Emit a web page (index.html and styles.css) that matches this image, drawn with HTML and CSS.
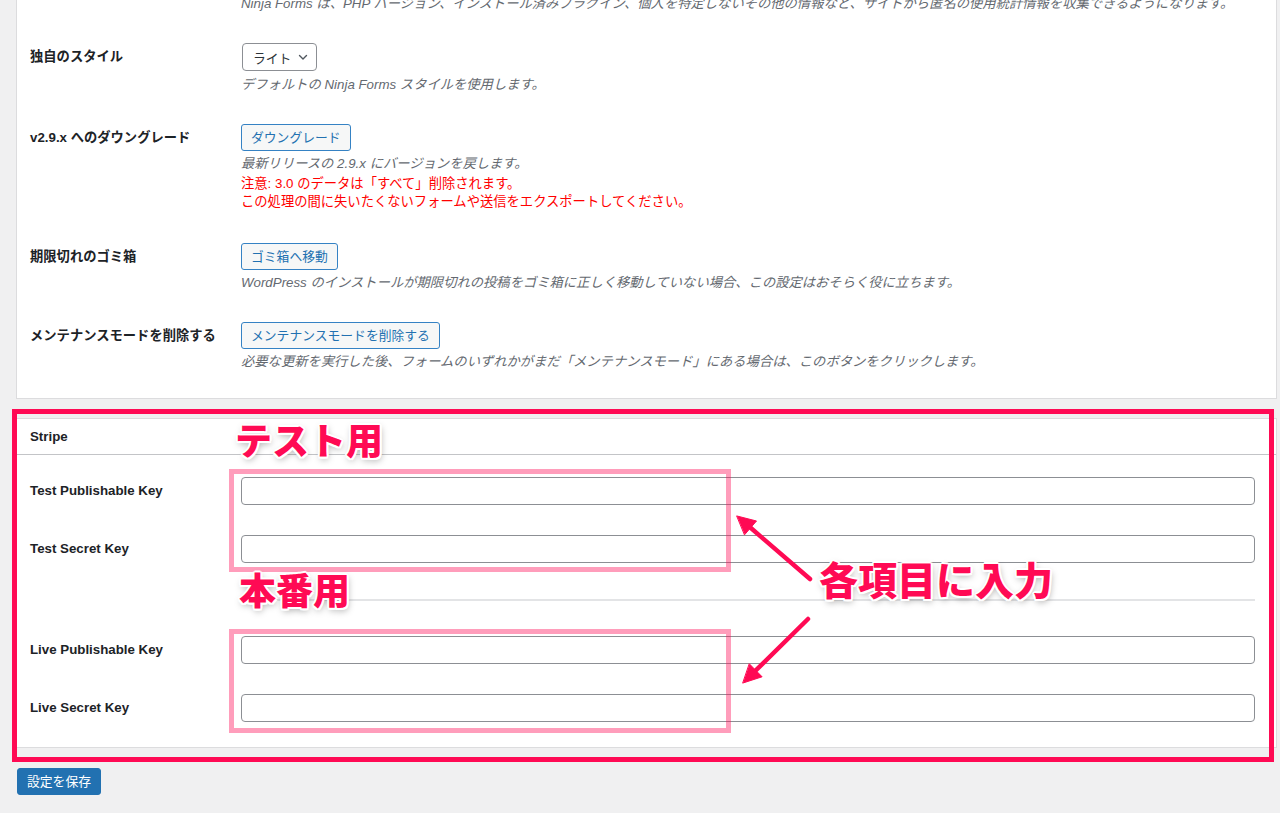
FILE: index.html
```html
<!DOCTYPE html>
<html lang="ja">
<head>
<meta charset="utf-8">
<title>Ninja Forms 設定</title>
<link rel="stylesheet" href="styles.css">
</head>
<body>
<div class="page">
  <div class="card card--clipped">
    <div class="row row--lead">
      <div class="th"></div>
      <div class="td td--lead">
        <p class="description description--lead">Ninja Forms は、PHP バージョン、インストール済みプラグイン、個人を特定しないその他の情報など、サイトから匿名の使用統計情報を収集できるようになります。</p>
      </div>
    </div>
    <div class="row">
      <div class="th">独自のスタイル</div>
      <div class="td">
        <div class="select">ライト
          <svg class="chev" width="10" height="7" viewBox="0 0 10 7"><polyline points="1.5,1.5 5,5 8.5,1.5" fill="none" stroke="#50575e" stroke-width="1.4" stroke-linecap="round" stroke-linejoin="round"/></svg>
        </div>
        <p class="description description--after-select">デフォルトの Ninja Forms スタイルを使用します。</p>
      </div>
    </div>
    <div class="row">
      <div class="th">v2.9.x へのダウングレード</div>
      <div class="td">
        <button class="button" type="button">ダウングレード</button>
        <p class="description">最新リリースの 2.9.x にバージョンを戻します。</p>
        <div class="warning">
          <div>注意: 3.0 のデータは「すべて」削除されます。</div>
          <div>この処理の間に失いたくないフォームや送信をエクスポートしてください。</div>
        </div>
      </div>
    </div>
    <div class="row">
      <div class="th">期限切れのゴミ箱</div>
      <div class="td">
        <button class="button" type="button">ゴミ箱へ移動</button>
        <p class="description">WordPress のインストールが期限切れの投稿をゴミ箱に正しく移動していない場合、この設定はおそらく役に立ちます。</p>
      </div>
    </div>
    <div class="row">
      <div class="th">メンテナンスモードを削除する</div>
      <div class="td">
        <button class="button" type="button">メンテナンスモードを削除する</button>
        <p class="description">必要な更新を実行した後、フォームのいずれかがまだ「メンテナンスモード」にある場合は、このボタンをクリックします。</p>
      </div>
    </div>
  </div>

  <div class="card card--stripe">
    <h2 class="card-title">Stripe</h2>
    <div class="card-body">
      <div class="row">
        <div class="th">Test Publishable Key</div>
        <div class="td"><input class="text-input" type="text"></div>
      </div>
      <div class="row">
        <div class="th">Test Secret Key</div>
        <div class="td"><input class="text-input" type="text"></div>
      </div>
      <div class="row">
        <div class="th th--empty"></div>
        <div class="td td--divider"><div class="divider"></div></div>
      </div>
      <div class="row">
        <div class="th">Live Publishable Key</div>
        <div class="td"><input class="text-input" type="text"></div>
      </div>
      <div class="row">
        <div class="th">Live Secret Key</div>
        <div class="td"><input class="text-input" type="text"></div>
      </div>
    </div>
  </div>

  <button class="button-primary" type="button">設定を保存</button>

  <div class="annotations">
    <div class="frame frame--red"></div>
    <div class="frame frame--pink frame--test"></div>
    <div class="frame frame--pink frame--live"></div>
    <div class="note note--test">テスト用</div>
    <div class="note note--live">本番用</div>
    <div class="note note--input">各項目に入力</div>
    <svg class="arrows" width="1280" height="813" viewBox="0 0 1280 813">
      <g stroke="#ff0a54" stroke-width="4.5" stroke-linecap="round" fill="#ff0a54">
        <line x1="810" y1="579" x2="750.6" y2="527.8"/>
        <polygon points="737,516 756.5,521 744.7,534.6" stroke-width="1" stroke-linejoin="round"/>
        <line x1="808" y1="619" x2="755.8" y2="670.4"/>
        <polygon points="743,683 762.1,676.8 749.5,664" stroke-width="1" stroke-linejoin="round"/>
      </g>
    </svg>
  </div>
</div>
</body>
</html>
```
FILE: styles.css
```css
* { box-sizing: border-box; }

html, body {
  margin: 0;
  padding: 0;
}

body {
  background: #f0f0f1;
  color: #1d2327;
  font-family: "Liberation Sans", "Noto Sans CJK JP", sans-serif;
  font-size: 13.3px;
  overflow: hidden;
  height: 813px;
}

.page {
  position: relative;
  display: flow-root;
  padding: 0 3px 0 16px;
  height: 813px;
}

.card {
  background: #fff;
  border: 1px solid #dcdcde;
}

.card--clipped {
  margin-top: -5px;
  border-top: none;
  padding-bottom: 12px;
}

.card--stripe {
  margin-top: 19px;
}

.card-title {
  margin: 0;
  padding: 8px 13px;
  font-size: 13.3px;
  line-height: 19px;
  font-weight: 700;
  border-bottom: 1px solid #c3c4c7;
}

.card-body {
  padding: 7px 0 10px;
}

.row {
  display: grid;
  grid-template-columns: 224px 1fr;
}

.th {
  padding: 20px 10px 20px 13px;
  line-height: 18px;
  font-weight: 700;
  color: #1d2327;
}

.td {
  padding: 15px 21px 15px 0;
}

.td--lead {
  padding-top: 0;
}

.row--lead .th {
  padding: 0;
}

.description {
  margin: 4px 0 0;
  line-height: 18px;
  color: #646970;
  font-style: italic;
}

.description--lead {
  margin-top: 0;
}

.description--after-select {
  margin-top: 5px;
}

.warning {
  margin: 2px 0 2px;
  line-height: 18px;
  color: #f00;
}

.select {
  display: inline-flex;
  align-items: center;
  gap: 7px;
  height: 28px;
  padding: 0 8px 0 10px;
  margin-left: 1px;
  border: 1px solid #8c8f94;
  border-radius: 4px;
  background: #fff;
  color: #2c3338;
  font-size: 12.8px;
}

.chev {
  display: block;
  margin-top: 1px;
}

.button {
  display: inline-block;
  height: 27px;
  padding: 0 9px;
  margin: 0;
  border: 1px solid #3582c4;
  border-radius: 3px;
  background: #f6f7f7;
  color: #2271b1;
  font-family: inherit;
  font-size: 12.8px;
  line-height: 25px;
  vertical-align: top;
}

.text-input {
  display: block;
  width: 100%;
  height: 28px;
  margin: 0;
  padding: 0 8px;
  border: 1px solid #8c8f94;
  border-radius: 4px;
  background: #fff;
  font-family: inherit;
  font-size: 13px;
}

.th--empty {
  padding: 0;
}

.td--divider {
  padding: 21px 21px 20px 0;
}

.divider {
  height: 2px;
  background: #e3e4e6;
}

.button-primary {
  display: block;
  margin: 20px 0 0 1px;
  height: 27px;
  padding: 0 9px;
  border: 1px solid #2271b1;
  border-radius: 3px;
  background: #2271b1;
  color: #fff;
  font-family: inherit;
  font-size: 12.8px;
  line-height: 25px;
}

/* annotation overlay */
.annotations {
  position: absolute;
  left: 0;
  top: 0;
  width: 1280px;
  height: 813px;
  pointer-events: none;
}

.frame {
  position: absolute;
  border-style: solid;
}

.frame--red {
  left: 12px;
  top: 409px;
  width: 1262px;
  height: 353px;
  border-width: 5px;
  border-color: #ff0a54;
}

.frame--pink {
  left: 229px;
  width: 502px;
  border-width: 5px;
  border-color: rgba(255, 10, 84, 0.4);
}

.frame--test {
  top: 469px;
  height: 103px;
}

.frame--live {
  top: 629px;
  height: 104px;
}

.note {
  position: absolute;
  color: #ff0a54;
  font-family: "Noto Sans CJK JP", sans-serif;
  font-weight: 900;
  line-height: 1;
  white-space: nowrap;
  text-shadow:
    2px 0 0 #fff, -2px 0 0 #fff, 0 2px 0 #fff, 0 -2px 0 #fff,
    1.5px 1.5px 0 #fff, -1.5px 1.5px 0 #fff, 1.5px -1.5px 0 #fff, -1.5px -1.5px 0 #fff,
    1px 3px 7px rgba(0, 0, 0, 0.35);
}

.note--test {
  left: 235px;
  top: 421px;
  font-size: 37px;
}

.note--live {
  left: 239px;
  top: 571px;
  font-size: 37px;
}

.note--input {
  left: 819px;
  top: 559px;
  font-size: 39px;
}

.arrows {
  position: absolute;
  left: 0;
  top: 0;
}
```
